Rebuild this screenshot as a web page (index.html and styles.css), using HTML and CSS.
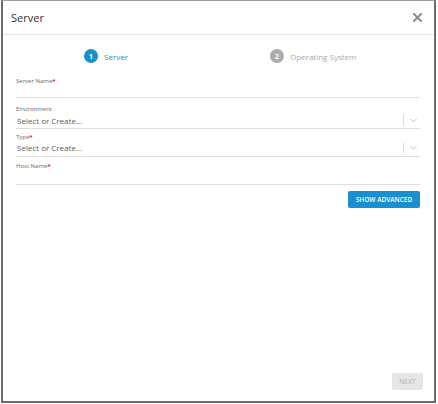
FILE: index.html
```html
<!DOCTYPE html>
<html>
<head>
<meta charset="utf-8">
<link rel="stylesheet" href="styles.css">
</head>
<body>
<div class="dialog">
  <div class="header">
    <span class="title">Server</span>
    <svg class="close" width="9" height="9" viewBox="0 0 9 9"><path d="M1 1 L8 8 M8 1 L1 8" stroke="#8c8c8c" stroke-width="2" stroke-linecap="square"/></svg>
  </div>
  <div class="steps">
    <div class="step step-active"><span class="num">1</span><span class="step-label">Server</span></div>
    <div class="step step-next"><span class="num">2</span><span class="step-label">Operating System</span></div>
  </div>
  <div class="form">
    <div class="field text-field first">
      <div class="label">Server Name<span class="req">*</span></div>
      <div class="input"></div>
    </div>
    <div class="field select-field env">
      <div class="label">Environment</div>
      <div class="select"><span class="placeholder">Select or Create...</span><span class="sep"></span><svg class="chev" width="7" height="5" viewBox="0 0 7 5"><path d="M0.5 1 L3.5 4 L6.5 1" fill="none" stroke="#b5b5b5" stroke-width="0.9"/></svg></div>
    </div>
    <div class="field select-field type">
      <div class="label">Type<span class="req">*</span></div>
      <div class="select"><span class="placeholder">Select or Create...</span><span class="sep"></span><svg class="chev" width="7" height="5" viewBox="0 0 7 5"><path d="M0.5 1 L3.5 4 L6.5 1" fill="none" stroke="#b5b5b5" stroke-width="0.9"/></svg></div>
    </div>
    <div class="field text-field host">
      <div class="label">Host Name<span class="req">*</span></div>
      <div class="input"></div>
    </div>
    <div class="adv-row"><button class="btn-adv">SHOW ADVANCED</button></div>
  </div>
  <div class="footer"><button class="btn-next">NEXT</button></div>
</div>
</body>
</html>
```
FILE: styles.css
```css
html, body { margin: 0; padding: 0; background: #fff; }
body { width: 438px; height: 404px; font-family: "Open Sans", "DejaVu Sans", sans-serif; }
.dialog {
  box-sizing: border-box;
  margin-left: 1px;
  width: 435px;
  height: 403px;
  border: 2px solid #6b6b6b;
  border-top: 1px solid #a0a0a0;
  display: flex;
  flex-direction: column;
  background: #fff;
}
.header {
  height: 33px;
  flex: none;
  border-bottom: 1px solid #e6e6e6;
  display: flex;
  align-items: center;
  justify-content: space-between;
  padding: 0 12px 0 8px;
}
.title { font-size: 11px; color: #333; }
.close { display: block; }
.steps {
  display: flex;
  align-items: center;
  height: 42px;
  flex: none;
  padding-left: 81px;
}
.step { display: flex; align-items: center; font-size: 8px; }
.step-active { width: 186px; color: #1a8fd0; }
.step-next { color: #aaa; }
.num {
  width: 14px; height: 14px; border-radius: 50%;
  display: inline-flex; align-items: center; justify-content: center;
  color: #fff; font-size: 7.5px; font-weight: bold; margin-right: 6px;
}
.step-active .num { background: #1a8fd0; }
.step-next .num { background: #acacac; }
.form { padding: 0 14px 0 13px; display: flex; flex-direction: column; }
.field { display: flex; flex-direction: column; }
.label { font-size: 6px; color: #6a6a6a; line-height: 9px; height: 9px; }
.req { color: #e0202a; font-weight: bold; }
.input { border-bottom: 1.5px solid #dedede; }
.first .input { height: 11px; }
.host .input { height: 13.5px; }
.env { margin-top: 7px; }
.type { margin-top: 3.5px; }
.host { margin-top: 5px; }
.select {
  height: 12px;
  padding-bottom: 2px;
  border-bottom: 1.5px solid #dedede;
  display: flex; align-items: center;
}
.placeholder { flex: 1; font-size: 8px; color: #5a5a5a; padding-left: 1px; }
.sep { width: 1px; height: 10px; background: #dcdcdc; margin-right: 6px; }
.chev { margin-right: 3px; }
.adv-row { display: flex; justify-content: flex-end; margin-top: 5.5px; }
.btn-adv {
  background: #1a8fd0; color: #fff; border: none; border-radius: 2px;
  font-family: inherit; font-size: 6.5px; font-weight: 600; height: 17px; width: 72px; padding: 0;
}
.footer { margin-top: auto; display: flex; justify-content: flex-end; padding: 0 11px 11px 0; }
.btn-next {
  background: #e6e6e6; color: #bdbdbd; border: none; border-radius: 2px;
  font-family: inherit; font-size: 6.5px; font-weight: 600; height: 17px; width: 31px; padding: 0;
}
```
